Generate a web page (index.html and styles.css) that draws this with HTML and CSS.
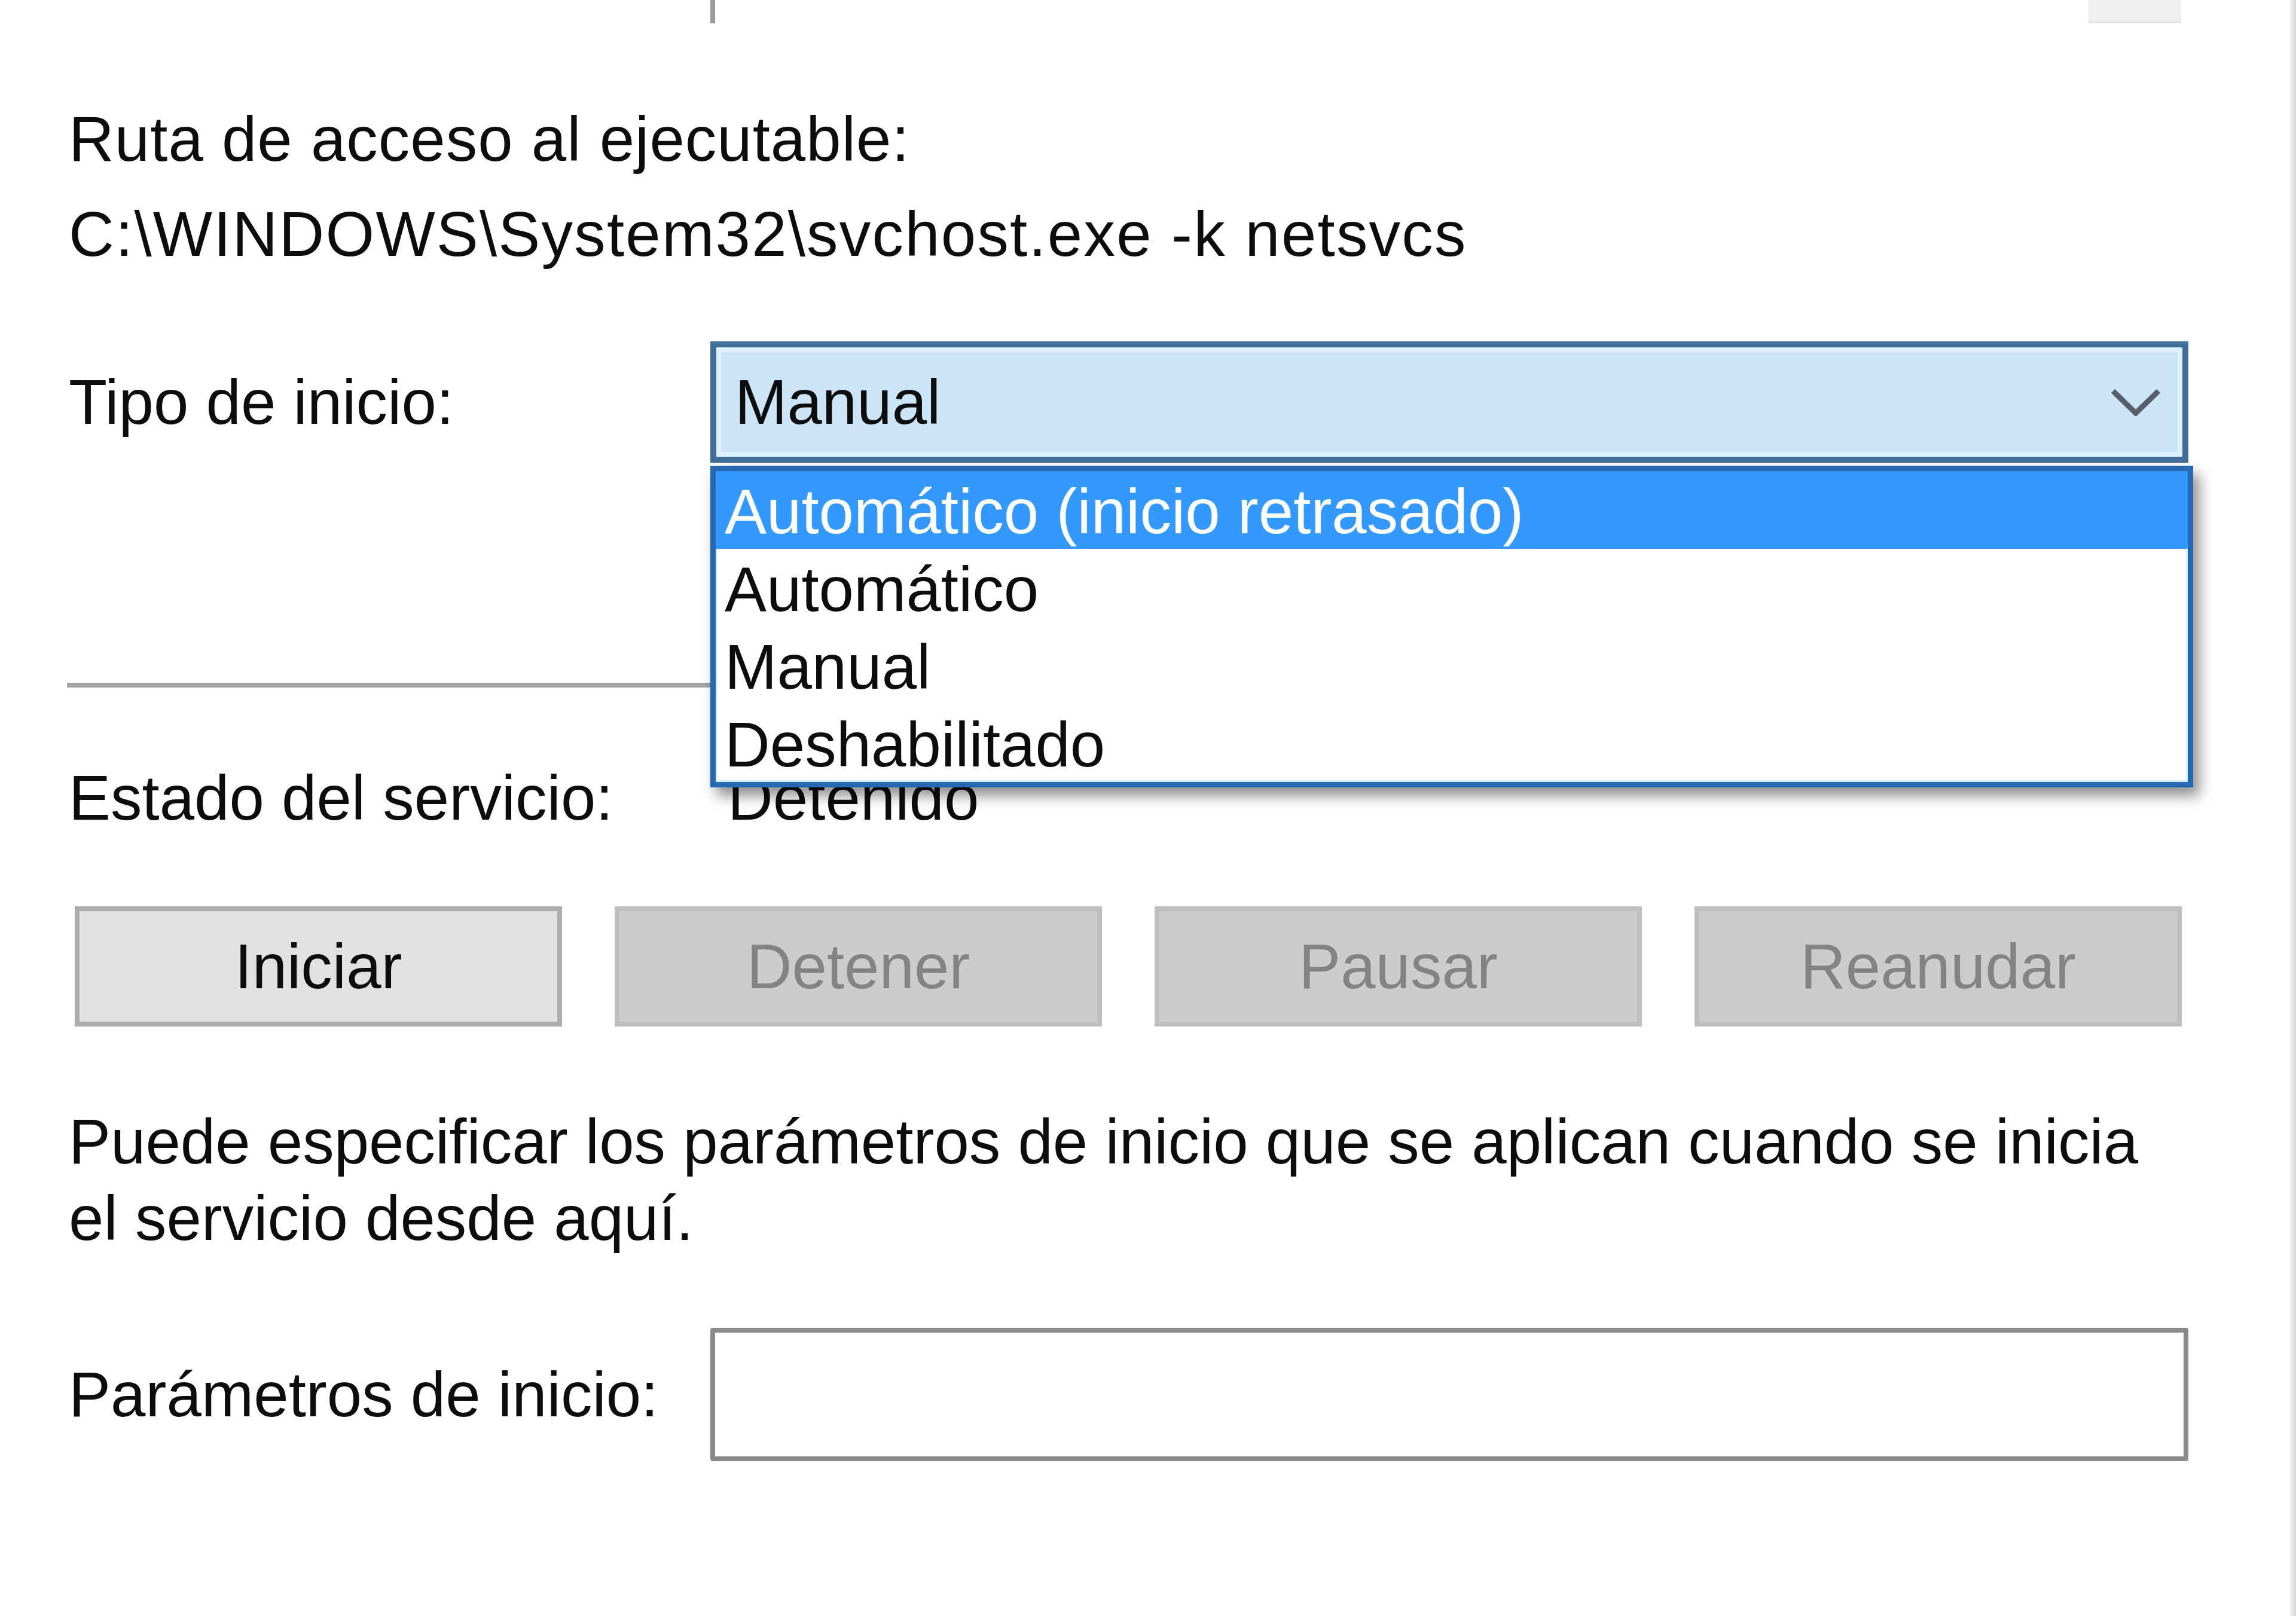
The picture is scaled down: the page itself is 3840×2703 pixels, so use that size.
FILE: index.html
```html
<!DOCTYPE html>
<html lang="es">
<head>
    <meta charset="UTF-8">
    <meta name="viewport" content="width=device-width, initial-scale=1.0">
    <title>Propiedades del servicio</title>
    <link rel="stylesheet" href="styles.css">
</head>
<body>
    <div class="dialog">
        <div class="content">
            <!-- bottom edge of the description box, scrolled off the top -->
            <div class="desc-tail"><span class="scroll-stub"></span></div>

            <div class="path-block">
                <div class="path-label">Ruta de acceso al ejecutable:</div>
                <div class="path">C:\WINDOWS\System32\svchost.exe -k netsvcs</div>
            </div>

            <div class="field startup">
                <label class="label" for="startType">Tipo de inicio:</label>
                <div class="combo" id="startType">
                    <span>Manual</span>
                    <svg class="chevron" width="84" height="46" viewBox="0 0 84 46">
                        <polyline points="4,4 42,41 80,4" fill="none" stroke="#565f69" stroke-width="9"/>
                    </svg>
                    <ul class="dropdown">
                        <li class="selected">Automático (inicio retrasado)</li>
                        <li>Automático</li>
                        <li>Manual</li>
                        <li>Deshabilitado</li>
                    </ul>
                </div>
            </div>

            <div class="separator"></div>

            <div class="field status">
                <span class="label">Estado del servicio:</span>
                <span class="state">Detenido</span>
            </div>

            <div class="buttons">
                <button>Iniciar</button>
                <button disabled>Detener</button>
                <button disabled>Pausar</button>
                <button disabled>Reanudar</button>
            </div>

            <p class="hint">Puede especificar los parámetros de inicio que se aplican cuando se inicia el servicio desde aquí.</p>

            <div class="field params">
                <label class="label" for="startParams">Parámetros de inicio:</label>
                <div class="textbox" id="startParams"></div>
            </div>
        </div>
        <div class="frame-edge"></div>
    </div>
</body>
</html>
```

FILE: styles.css
```css
body {
    margin: 0;
    background-color: #fff;
    font-family: "Liberation Sans", Arial, sans-serif;
    font-size: 105px;
    color: #0d0d0d;
}
.dialog {
    display: flex;
    min-height: 2703px;
}
.content {
    flex: 1;
    padding: 0 170px 0 115px;
}
.frame-edge {
    width: 10px;
    background: linear-gradient(to right, #f0f0f0, #d6d6d6);
}
.desc-tail {
    height: 39px;
    margin-left: 1073px;
    border-left: 8px solid #9c9c9c;
    display: flex;
    justify-content: flex-end;
    padding-right: 12px;
}
.scroll-stub {
    width: 155px;
    background-color: #efefef;
    border-bottom: 4px solid #e6e6e6;
}
.path-block {
    margin-top: 114px;
    line-height: 159px;
    white-space: nowrap;
}
.path-label {
    letter-spacing: 1px;
}
.path {
    letter-spacing: 2.2px;
}
.field {
    display: flex;
    align-items: center;
}
.label {
    flex: 0 0 1073px;
    white-space: nowrap;
}
.startup {
    margin-top: 100px;
}
.combo {
    position: relative;
    flex: 1;
    box-sizing: border-box;
    height: 203px;
    display: flex;
    align-items: center;
    justify-content: space-between;
    padding: 0 36px 0 31px;
    background-color: #cce4f7;
    border: 10px solid #416f9a;
    box-shadow: inset 0 0 0 8px #dcf0fd;
}
.dropdown {
    position: absolute;
    top: 198px;
    left: -10px;
    right: -18px;
    margin: 0;
    padding: 0;
    list-style: none;
    background-color: #fff;
    border: 9px solid #2768b0;
    box-shadow: inset 0 0 0 3px #d6f1ff, 10px 14px 22px rgba(0, 0, 0, 0.45);
}
.dropdown li {
    box-sizing: border-box;
    height: 130px;
    padding: 6px 0 0 15px;
    line-height: 124px;
    white-space: nowrap;
}
.dropdown .selected {
    background-color: #3399ff;
    color: #fff;
}
.separator {
    margin-top: 368px;
    margin-left: -3px;
    height: 8px;
    background-color: #a3a3a3;
}
.status {
    margin-top: 120px;
    line-height: 130px;
}
.state {
    padding-left: 29px;
}
.buttons {
    margin: 116px 11px 0 10px;
    display: grid;
    grid-template-columns: repeat(4, 1fr);
    column-gap: 88px;
}
button {
    height: 201px;
    font-family: inherit;
    font-size: 105px;
    color: #0d0d0d;
    background-color: #e1e1e1;
    border: 8px solid #adadad;
    padding: 0;
}
button:disabled {
    color: #838383;
    background-color: #cccccc;
    border-color: #bfbfbf;
}
.hint {
    margin: 129px 0 0;
    line-height: 128px;
}
.params {
    margin-top: 119px;
}
.textbox {
    flex: 1;
    box-sizing: border-box;
    height: 223px;
    background-color: #fff;
    border: 8px solid #8a8a8a;
    border-radius: 4px;
}
```
